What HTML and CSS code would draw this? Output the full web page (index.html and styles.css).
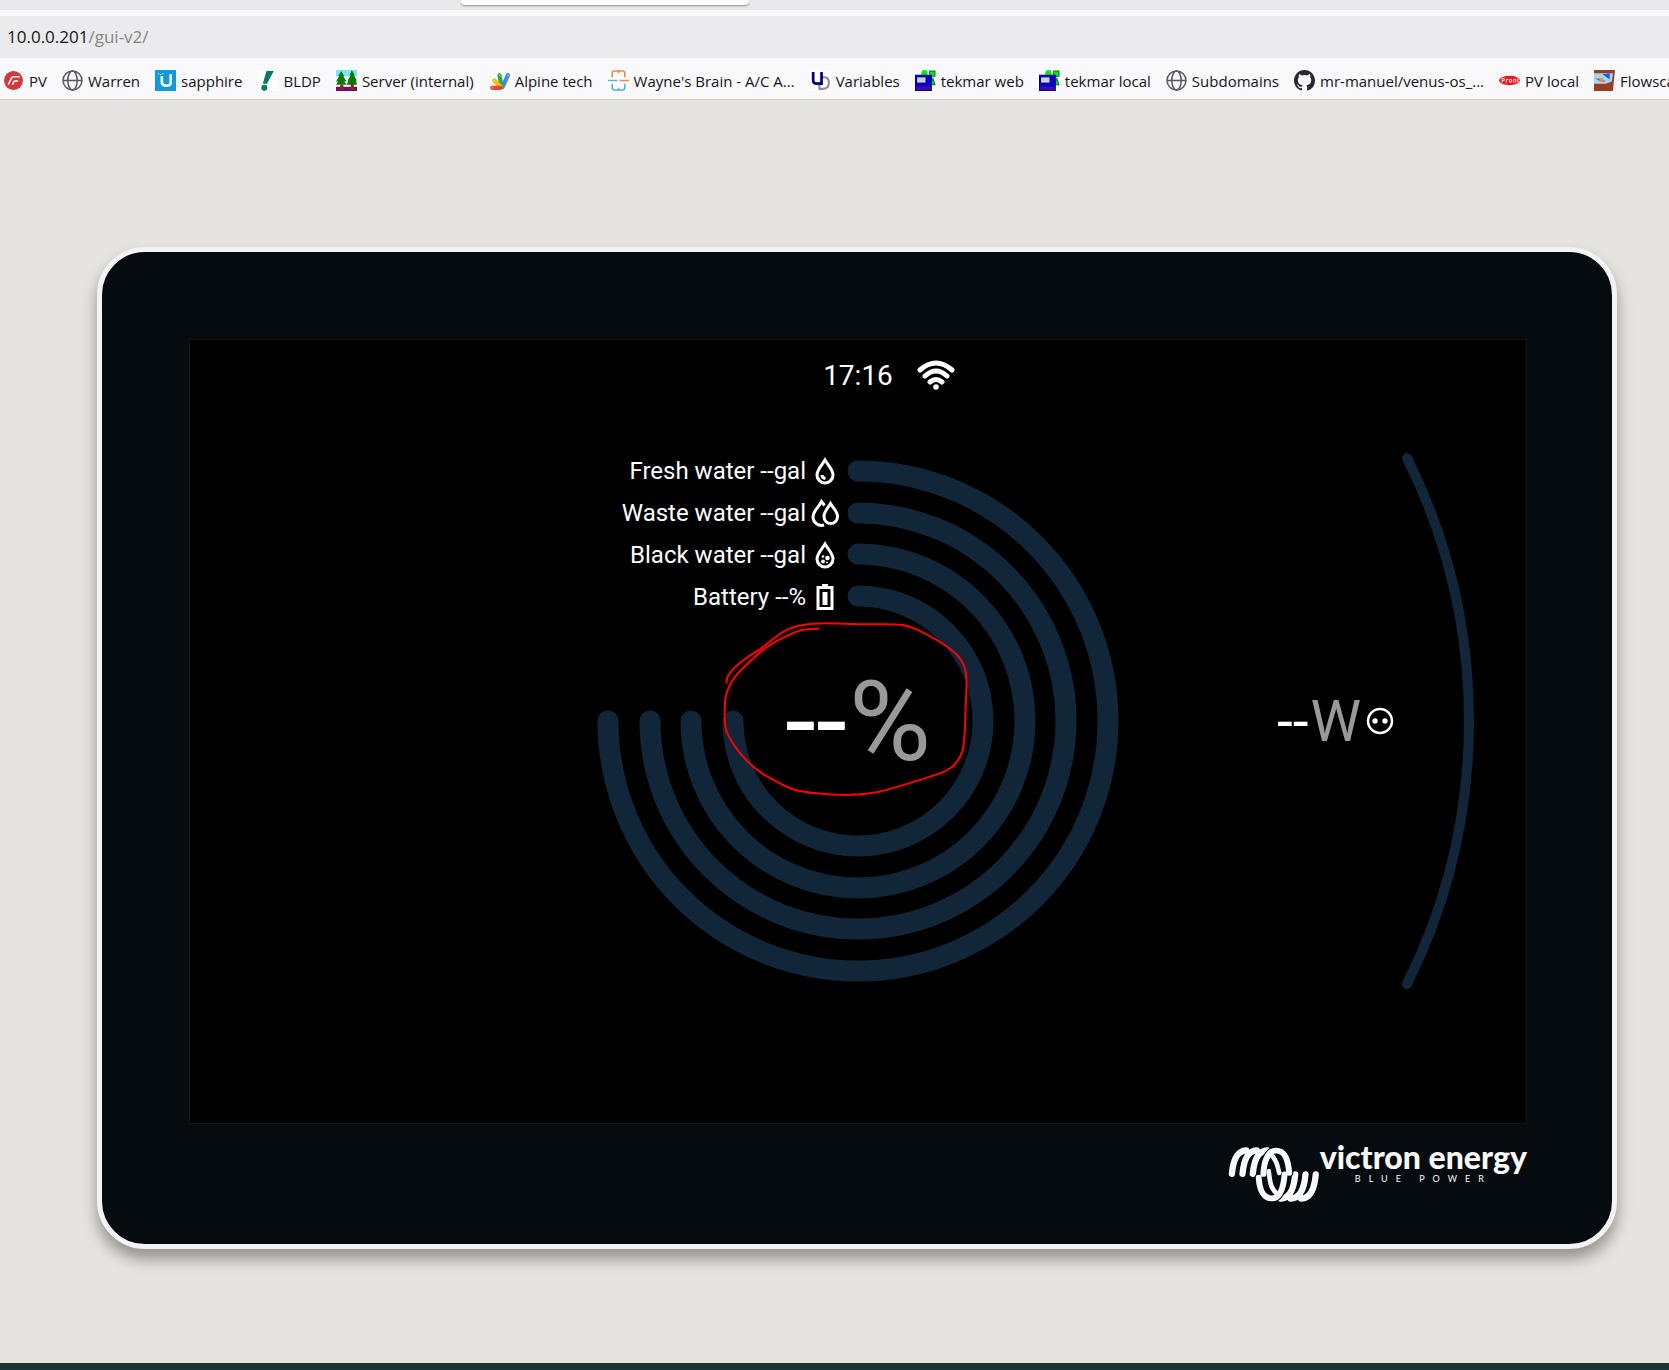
FILE: index.html
```html
<!DOCTYPE html>
<html lang="en">
<head>
    <meta charset="UTF-8">
    <meta name="viewport" content="width=device-width, initial-scale=1.0">
    <title>gui-v2</title>
    <link rel="stylesheet" href="styles.css">
</head>
<body>
    <header class="browser">
        <div class="tab-strip"><div class="tab"></div></div>
        <div class="address-bar"><span class="host">10.0.0.201</span><span class="path">/gui-v2/</span></div>
        <nav class="bookmarks">
            <a href="#"><svg viewBox="0 0 20 20"><circle cx="10" cy="10" r="9" fill="#d7363b"/><path d="M5 14l3-6q.5-1.500 2-1.500h6M9 14l1-2.500q.5-1 1.500-1h3" fill="none" stroke="#fff" stroke-width="1.500"/></svg>PV</a>
            <a href="#"><svg viewBox="0 0 20 20" fill="none" stroke="#5b5b66" stroke-width="1.500"><circle cx="10" cy="10" r="9"/><ellipse cx="10" cy="10" rx="4.500" ry="9"/><path d="M1 10h18"/></svg>Warren</a>
            <a href="#"><svg viewBox="0 0 20 20"><path fill="#129ad8" d="M0 0h20v20H0z"/><path d="M6.500 6v5q0 4 4.500 4t4-4V4" fill="none" stroke="#fff" stroke-width="2.500"/><path fill="#fff" d="M3 3h1v1H3zM5 4h1v1H5zM7 3h1v1H7z"/></svg>sapphire</a>
            <a href="#"><svg viewBox="0 0 20 20"><path fill="#fff" d="M0 0h20v20H0z"/><path fill="#087866" d="M9 1h7L9.500 13h-4z"/><circle cx="7" cy="17" r="2.900" fill="#087866"/></svg>BLDP</a>
            <a href="#"><svg viewBox="0 0 20 20"><path fill="#7fe3f5" d="M0 0h20v8H0z"/><path fill="#fff" d="M0 6h20v9H0z"/><path fill="#800070" d="M0 16h20v4H0z"/><path fill="#087a08" d="M5 1l3 5H7l3 5H8l2 3H0l2-3H0l3-5H2zM15 0l3 5h-1l3 5h-1l1 4H10l2-4h-1l3-5h-1z"/><path fill="#7a3510" d="M4 14h3v5H4zM14 13h3v6h-3z"/></svg>Server (internal)</a>
            <a href="#"><svg viewBox="0 0 20 20" fill="none" stroke-linecap="round" stroke-width="4"><path stroke="#4285f4" d="M18 5l-5 11"/><path stroke="#34a853" d="M10 5l2 11"/><path stroke="#fbbc04" d="M5 10l6 6"/><path stroke="#ea4335" d="M3 17h8"/><path stroke="#fff" stroke-width="1" d="M3 17h.1M5 10h.1M10 5h.1M18 5h.1"/></svg>Alpine tech</a>
            <a href="#"><svg viewBox="0 0 20 20" fill="none" stroke-width="1.500"><path fill="#fff" d="M0 0h20v20H0z"/><path stroke="#f58345" d="M4 7V3q0-2 2-2h8q2 0 2 2v4M10 0v3M11 10h9"/><path stroke="#58add5" d="M4 13v4q0 2 2 2h8q2 0 2-2v-4M10 17v3M0 10h9"/></svg>Wayne's Brain - A/C A...</a>
            <a href="#"><svg viewBox="0 0 20 20" fill="none"><path fill="#fff" d="M0 0h20v20H0z"/><path stroke="#8e8e8e" stroke-width="2" d="M9 13v5h3q6 0 6-6t-6-5h-1"/><path stroke="#00007e" stroke-width="2.600" d="M3 2v8q0 3 3.500 3H11V2"/></svg>Variables</a>
            <a href="#"><svg viewBox="0 0 20 20"><circle cx="9" cy="3" r="3" fill="#00e817"/><path fill="#00e817" stroke="#073" d="M14 1h5v5h-5zM15 14l2-6 2 6z"/><path fill="#0000c6" stroke="#000070" d="M.5 5h15v14.500H.5z"/><path fill="#d0d0d0" d="M2 7h8v5H2z"/><path fill="#5000b0" d="M1 16h14v3H1z"/></svg>tekmar web</a>
            <a href="#"><svg viewBox="0 0 20 20"><circle cx="9" cy="3" r="3" fill="#00e817"/><path fill="#00e817" stroke="#073" d="M14 1h5v5h-5zM15 14l2-6 2 6z"/><path fill="#0000c6" stroke="#000070" d="M.5 5h15v14.500H.5z"/><path fill="#d0d0d0" d="M2 7h8v5H2z"/><path fill="#5000b0" d="M1 16h14v3H1z"/></svg>tekmar local</a>
            <a href="#"><svg viewBox="0 0 20 20" fill="none" stroke="#5b5b66" stroke-width="1.500"><circle cx="10" cy="10" r="9"/><ellipse cx="10" cy="10" rx="4.500" ry="9"/><path d="M1 10h18"/></svg>Subdomains</a>
            <a href="#"><svg viewBox="0 0 16 16"><path fill="#24292f" d="M8 0C3.580 0 0 3.580 0 8c0 3.540 2.290 6.530 5.470 7.590.4.070.55-.17.55-.38 0-.19-.01-.82-.01-1.490-2.010.37-2.530-.49-2.690-.94-.09-.23-.48-.94-.82-1.130-.28-.15-.68-.52-.01-.53.63-.01 1.080.58 1.230.82.720 1.210 1.870.87 2.330.66.070-.52.280-.87.510-1.070-1.780-.2-3.640-.89-3.640-3.950 0-.87.310-1.590.82-2.150-.08-.2-.36-1.020.08-2.120 0 0 .67-.21 2.200.82a7.600 7.600 0 014 0c1.530-1.040 2.200-.82 2.200-.82.440 1.100.160 1.920.080 2.120.510.560.820 1.270.820 2.150 0 3.070-1.870 3.750-3.650 3.950.290.250.540.730.540 1.480 0 1.070-.01 1.930-.01 2.200 0 .21.150.46.550.38A8.010 8.010 0 0016 8c0-4.420-3.580-8-8-8z"/></svg>mr-manuel/venus-os_...</a>
            <a href="#"><svg viewBox="0 0 20 20"><ellipse cx="10" cy="10" rx="10" ry="4.500" fill="#f01818"/><path d="M3 12V8h2v2H3m4 2V9h2m1 0h2v2.500h-2zm4 3V9h2v3m2 0V8" fill="none" stroke="#fff" stroke-width=".8"/></svg>PV local</a>
            <a href="#"><svg viewBox="0 0 20 20"><path fill="#983c22" d="M0 0h20l-2 20H0z"/><path fill="#9bdcf2" d="M0 3h18l-1 8-6 2H0z"/><path fill="#334ff0" d="M8 4l7-1v6z"/><path fill="#f43b21" d="M1 8h7l3 3H6z"/><path fill="#ffe34a" d="M5 9h4v1H5z"/></svg>Flowscape</a>
        </nav>
    </header>

    <main class="page">
        <div class="device">
            <section class="screen">
                <div class="status">
                    <time class="clock">17:16</time>
                    <svg class="wifi" viewBox="0 0 38 30" fill="none" stroke="#fff" stroke-width="5" stroke-linecap="round"><path d="M3 10Q19-4 35 10M8 16Q19 6 30 16M13 22Q19 17 25 22"/><circle cx="19" cy="27" r="2.800" fill="#fff" stroke="none"/></svg>
                </div>

                <div class="panels">
                    <div class="gauge">
                        <svg class="rings" viewBox="0 0 542 542">
                            <path d="M271 21A250 250 0 1 1 21 271"/>
                            <path d="M271 63A208 208 0 1 1 63 271"/>
                            <path d="M271 104A167 167 0 1 1 104 271"/>
                            <path d="M271 146A125 125 0 1 1 146 271"/>
                        </svg>
                        <ul class="levels">
                            <li>Fresh water --gal
                                <svg viewBox="0 0 28 28"><path d="M14 3C11 8 6 12.500 6 18a8 8 0 0 0 16 0C22 12.500 17 8 14 3z"/><path d="M11 18q0 3 3.500 3.500"/></svg>
                            </li>
                            <li>Waste water --gal
                                <svg viewBox="0 0 28 28"><path d="M19.500 4.500C17 9 13 12.500 13 17.500a6.700 7 0 0 0 13.500 0C26.500 12.500 22 9 19.500 4.500z"/><path d="M13.500 6.500L10.500 2.500C8 8 2 12 2 18a8.500 8.500 0 0 0 11 8"/></svg>
                            </li>
                            <li>Black water --gal
                                <svg viewBox="0 0 28 28"><path d="M14 3C11 8 6 12.500 6 18a8 8 0 0 0 16 0C22 12.500 17 8 14 3z"/><g fill="#fff" stroke="none"><circle cx="12" cy="15.500" r="1.300"/><circle cx="16.500" cy="17" r="2.300"/><circle cx="12" cy="20.500" r="1.900"/><circle cx="16" cy="21.500" r="1"/></g></svg>
                            </li>
                            <li>Battery --%
                                <svg viewBox="0 0 28 28"><path d="M7 4.500h14v21H7z"/><path fill="#fff" stroke="none" d="M11.500 9h5v13h-5zM11 1h6v3h-6z"/></svg>
                            </li>
                        </ul>
                        <div class="percent">--<span class="unit">%</span></div>
                        <svg class="marker" viewBox="21 -480 1626 1626">
                            <path d="M440 218C435 190 485 150 540 118C595 75 620 45 700 41C770 37 800 44 880 43C950 43 965 40 1010 58C1045 75 1115 112 1140 145C1165 180 1160 215 1158 270C1153 350 1158 380 1147 425C1135 460 1110 480 1080 490C990 520 940 535 890 547C830 558 750 554 710 550C650 544 630 537 600 520L550 493C500 460 455 405 438 360C430 320 435 290 436 265C444 225 460 205 480 183C520 145 555 108 600 88C660 58 665 56 716 56"/>
                        </svg>
                    </div>

                    <div class="side">
                        <div class="power">--<span class="unit">W</span></div>
                        <svg class="socket" viewBox="0 0 28 28"><circle cx="14" cy="14" r="12" fill="none" stroke="#fff" stroke-width="2.500"/><circle cx="9" cy="14" r="2.700" fill="#fff"/><circle cx="19" cy="14" r="2.700" fill="#fff"/></svg>
                        <svg class="arc" viewBox="0 0 76 542"><path d="M7 8A589 589 0 0 1 7 534"/></svg>
                    </div>
                </div>
            </section>

            <footer class="brand">
                <svg class="logo" viewBox="76 74 276 172" fill="none" stroke-linecap="round">
                    <g stroke="#f9f9fb" stroke-width="19">
                        <path d="M87 158C91 112 106 88 130 87M119 158C123 112 139 88 162 87M150 158C154 112 170 88 194 87"/>
                        <path d="M340 160C336 207 320 232 296 233M309 160C305 207 289 232 264 233M278 160C274 207 258 232 234 233"/>
                    </g>
                    <g stroke="#060b0f" stroke-width="25">
                        <path d="M182 158C184 112 200 88 220 88C246 88 256 112 260 155"/>
                        <path d="M246 160C242 207 230 232 208 232C184 232 170 208 168 170"/>
                    </g>
                    <g stroke="#f9f9fb" stroke-width="18">
                        <path d="M182 158C184 112 200 88 220 88C246 88 256 112 260 155"/>
                        <path d="M246 160C242 207 230 232 208 232C184 232 170 208 168 170"/>
                        <path d="M202 98C226 116 224 140 230 155M226 222C202 202 202 180 198 150" stroke-width="14"/>
                    </g>
                </svg>
                <div class="wordmark">
                    <span class="name">victron energy</span>
                    <span class="tagline">BLUE POWER</span>
                </div>
            </footer>
        </div>
    </main>
    <div class="taskbar"></div>
</body>
</html>
```
FILE: styles.css
```css
* {
    box-sizing: border-box;
}
body {
    margin: 0;
    min-height: 100vh;
    display: flex;
    flex-direction: column;
    background: #e5e4e0;
    font-family: Roboto, "Liberation Sans", sans-serif;
    overflow-x: hidden;
}
svg {
    display: block;
    flex: none;
}

/* browser chrome */
.browser {
    font-family: "Open Sans", "Noto Sans", sans-serif;
    background: #f9f9fb;
    border-bottom: 1px solid #cccdcb;
    overflow: hidden;
}
.tab-strip {
    height: 10px;
    padding-left: 461px;
    background: #e9e9eb;
}
.tab {
    width: 288px;
    height: 5px;
    background: #fff;
    border-radius: 0 0 4px 4px;
    box-shadow: 0 1px 2px rgba(0, 0, 0, 0.4);
}
.address-bar {
    margin-top: 6px;
    padding: 1px 0 1px 7px;
    line-height: 40px;
    font-size: 17px;
    background: #ebebed;
    color: #15141a;
}
.path {
    color: #858588;
}
.bookmarks {
    display: flex;
    align-items: center;
    gap: 15px;
    height: 41px;
    padding: 4px 0 0 3px;
}
.bookmarks a {
    display: flex;
    align-items: center;
    gap: 5px;
    flex: none;
    white-space: nowrap;
    font-size: 15px;
    color: #15141a;
    text-decoration: none;
}
.bookmarks svg {
    width: 21px;
    height: 21px;
}

/* device frame */
.page {
    flex: 1;
    padding: 147px 52px 80px 97px;
}
.device {
    padding: 87px 85px 41px 87px;
    background: #060b0f;
    border: 5px solid #f3f3f6;
    border-radius: 48px;
    box-shadow: 0 10px 15px rgba(0, 0, 0, 0.36);
}
.screen {
    background: #000;
    border: 1px solid #141414;
    color: #fff;
}
.status {
    display: grid;
    grid-template-columns: 1fr auto 1fr;
    align-items: center;
    gap: 24px;
    height: 70px;
}
.clock {
    grid-column: 2;
    font-size: 28px;
}
.wifi {
    width: 38px;
    height: 30px;
}
.panels {
    display: grid;
    grid-template-columns: 1fr 542px 1fr;
    padding: 40px 0 131px;
}

/* ring gauge, its layers share one grid cell */
.gauge {
    grid-column: 2;
    display: grid;
    grid-template-columns: 1fr 1fr;
}
.rings,
.marker,
.percent {
    grid-area: 1 / 1 / 2 / 3;
    width: 100%;
}
.rings path,
.arc path {
    fill: none;
    stroke: #12263a;
    stroke-width: 21;
    stroke-linecap: round;
}
.marker path {
    fill: none;
    stroke: #f00;
    stroke-width: 6;
    stroke-linecap: round;
}
.levels {
    grid-area: 1 / 1 / 2 / 2;
    margin: 0;
    padding: 0 19px 0 0;
    list-style: none;
}
.levels li {
    display: flex;
    align-items: center;
    justify-content: flex-end;
    gap: 5px;
    height: 42px;
    font-size: 24px;
    line-height: 28px;
    white-space: nowrap;
}
.levels svg {
    width: 28px;
    height: 28px;
    fill: none;
    stroke: #fff;
    stroke-width: 3;
}
.percent {
    align-self: center;
    text-align: center;
    font-size: 112px;
}
.unit {
    margin-left: 2px;
    color: #999;
}

.side {
    display: flex;
    align-items: center;
    justify-content: flex-end;
    padding-right: 50px;
}
.power {
    font-size: 57px;
}
.socket {
    width: 28px;
    height: 28px;
    margin: 0 6px 0 5px;
}
.arc {
    width: 76px;
    height: 542px;
}
.arc path {
    stroke-width: 10;
}

/* branding */
.brand {
    display: flex;
    justify-content: flex-end;
    padding-top: 17px;
}
.logo {
    width: 92px;
    height: 57px;
    margin-top: 5px;
}
.wordmark {
    display: flex;
    flex-direction: column;
    align-items: center;
    font-family: Lato, "Liberation Sans", sans-serif;
    color: #f9f9fb;
}
.name {
    font-size: 32px;
    font-weight: 900;
    line-height: 32px;
}
.tagline {
    font-size: 9px;
    line-height: 12px;
    letter-spacing: 8px;
}

.taskbar {
    height: 7px;
    background: #1b3532;
}
```
